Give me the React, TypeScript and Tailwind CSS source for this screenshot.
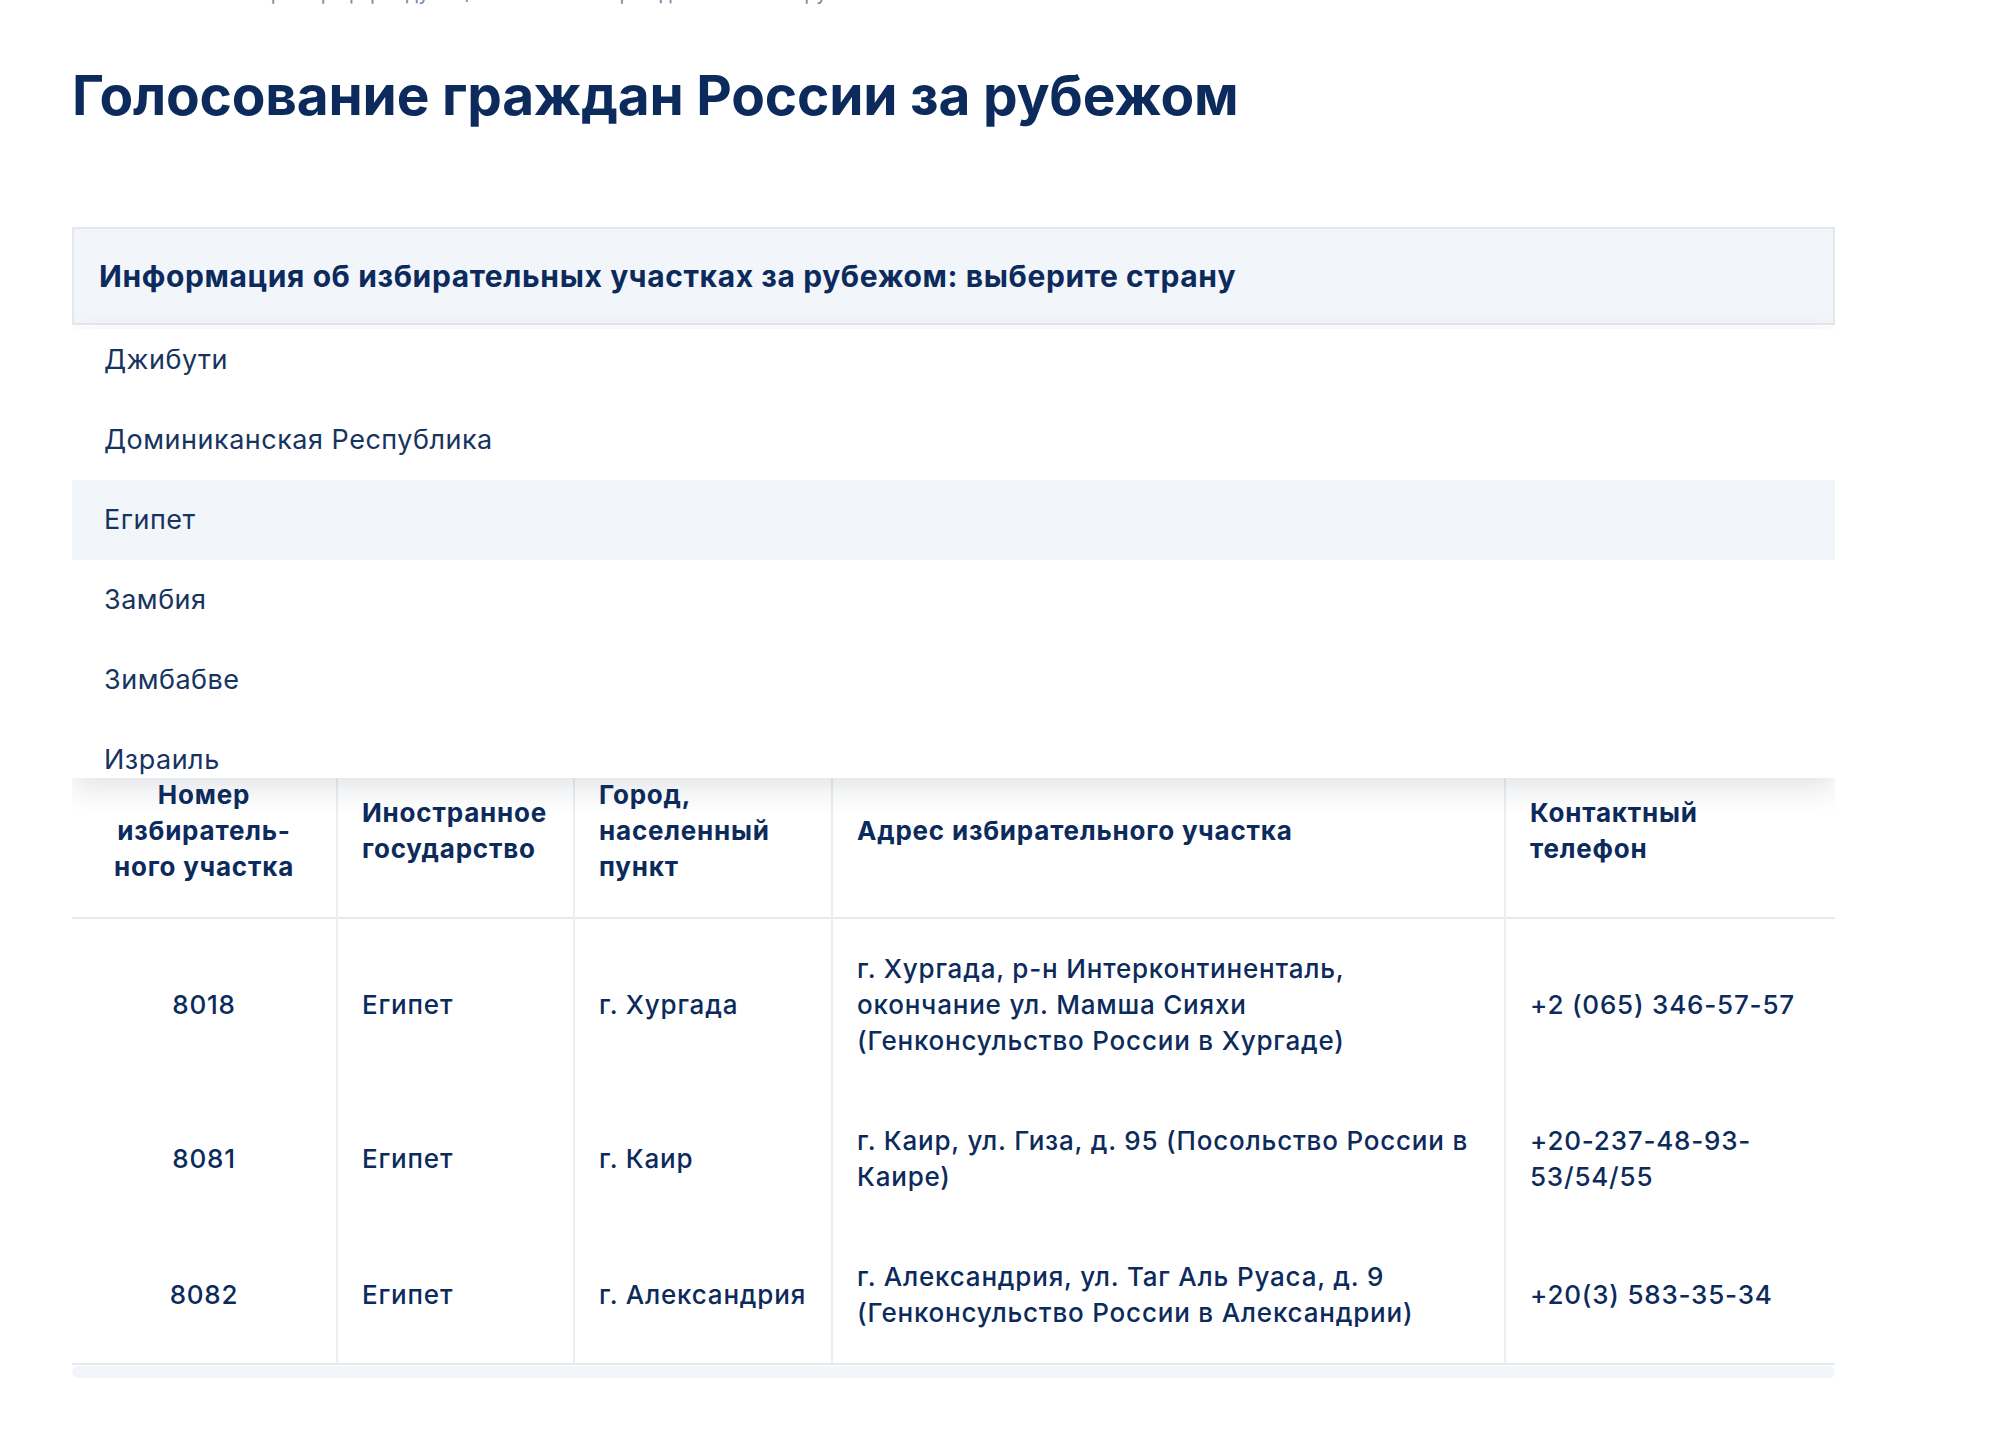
import React from "react"

const COUNTRIES = ["Джибути", "Доминиканская Республика", "Египет", "Замбия", "Зимбабве", "Израиль"]

const ROWS = [
  {
    num: "8018",
    country: "Египет",
    city: "г. Хургада",
    address: "г. Хургада, р-н Интерконтиненталь, окончание ул. Мамша Сияхи (Генконсульство России в Хургаде)",
    phone: "+2 (065) 346-57-57",
  },
  {
    num: "8081",
    country: "Египет",
    city: "г. Каир",
    address: "г. Каир, ул. Гиза, д. 95 (Посольство России в Каире)",
    phone: "+20-237-48-93-53/54/55",
  },
  {
    num: "8082",
    country: "Египет",
    city: "г. Александрия",
    address: "г. Александрия, ул. Таг Аль Руаса, д. 9 (Генконсульство России в Александрии)",
    phone: "+20(3) 583-35-34",
  },
]

export default function App() {
  return (
    <div className="min-h-[1430px] bg-white text-[#0c2b5c]" style={{ fontFamily: "Inter, 'Noto Sans', sans-serif" }}>
      <div className="w-[1763px] ml-[72px] overflow-hidden">
        {/* Breadcrumbs, scrolled off the top */}
        <div className="-mt-[17px] pl-[147px] text-[20px] leading-[20px] text-[#7b8aa6] whitespace-nowrap">
          Выборы и референдумы / Голосование граждан России за рубежом
        </div>

        <h1 className="mt-[59px] text-[55px] leading-[66px] font-bold tracking-[-0.2px]">
          Голосование граждан России за рубежом
        </h1>

        <div className="relative mt-[99px]">
          <div className="h-[98px] flex items-center px-[25px] bg-[#f2f6fb] border-2 border-[#e6e8ed]">
            <p className="text-[30px] font-bold tracking-[0.6px]">Информация об избирательных участках за рубежом: выберите страну</p>
          </div>

          {/* Country dropdown */}
          <div className="absolute left-0 right-0 top-[102px] z-10 h-[449px] overflow-hidden bg-white shadow-[0_10px_28px_rgba(40,55,80,0.14)]">
            <div className="-mt-[9px]">
              {COUNTRIES.map((c) => (
                <div
                  key={c}
                  className={`h-[80px] flex items-center pl-[32px] text-[27px] tracking-[0.5px] text-[#17335f] ${c === "Египет" ? "bg-[#f2f6fb]" : ""}`}
                >
                  {c}
                </div>
              ))}
            </div>
          </div>

          {/* Polling stations table */}
          <table className="mt-[420px] w-full table-fixed border-collapse text-[26px] leading-[36px] tracking-[0.8px]">
            <colgroup>
              <col className="w-[265px]" />
              <col className="w-[237px]" />
              <col className="w-[258px]" />
              <col className="w-[673px]" />
              <col className="w-[330px]" />
            </colgroup>
            <thead>
              <tr className="border-b-2 border-[#e6e8ed]">
                <th className="px-3 py-8 text-center font-bold">
                  Номер
                  <br />
                  избиратель-
                  <br />
                  ного участка
                </th>
                <th className="pl-6 pr-2 py-8 text-left font-bold border-l-2 border-[#eceef1]">
                  Иностранное
                  <br />
                  государство
                </th>
                <th className="pl-6 pr-2 py-8 text-left font-bold border-l-2 border-[#eceef1]">
                  Город,
                  <br />
                  населенный
                  <br />
                  пункт
                </th>
                <th className="pl-6 pr-[28px] py-8 text-left font-bold border-l-2 border-[#eceef1]">Адрес избирательного участка</th>
                <th className="pl-6 pr-3 py-8 text-left font-bold border-l-2 border-[#eceef1]">
                  Контактный
                  <br />
                  телефон
                </th>
              </tr>
            </thead>
            <tbody className="font-medium">
              {ROWS.map((r) => (
                <tr key={r.num}>
                  <td className="px-3 py-8 text-center">{r.num}</td>
                  <td className="pl-6 pr-2 py-8 border-l-2 border-[#eceef1]">{r.country}</td>
                  <td className="pl-6 pr-2 py-8 border-l-2 border-[#eceef1]">{r.city}</td>
                  <td className="pl-6 pr-[28px] py-8 border-l-2 border-[#eceef1]">{r.address}</td>
                  <td className="pl-6 pr-3 py-8 border-l-2 border-[#eceef1]">{r.phone}</td>
                </tr>
              ))}
            </tbody>
          </table>
          <div className="border-t-2 border-[#e6e8ed]" />
          <div className="mt-[1px] h-[12px] rounded-full bg-[#f2f6fb]" />
        </div>
      </div>
    </div>
  )
}
